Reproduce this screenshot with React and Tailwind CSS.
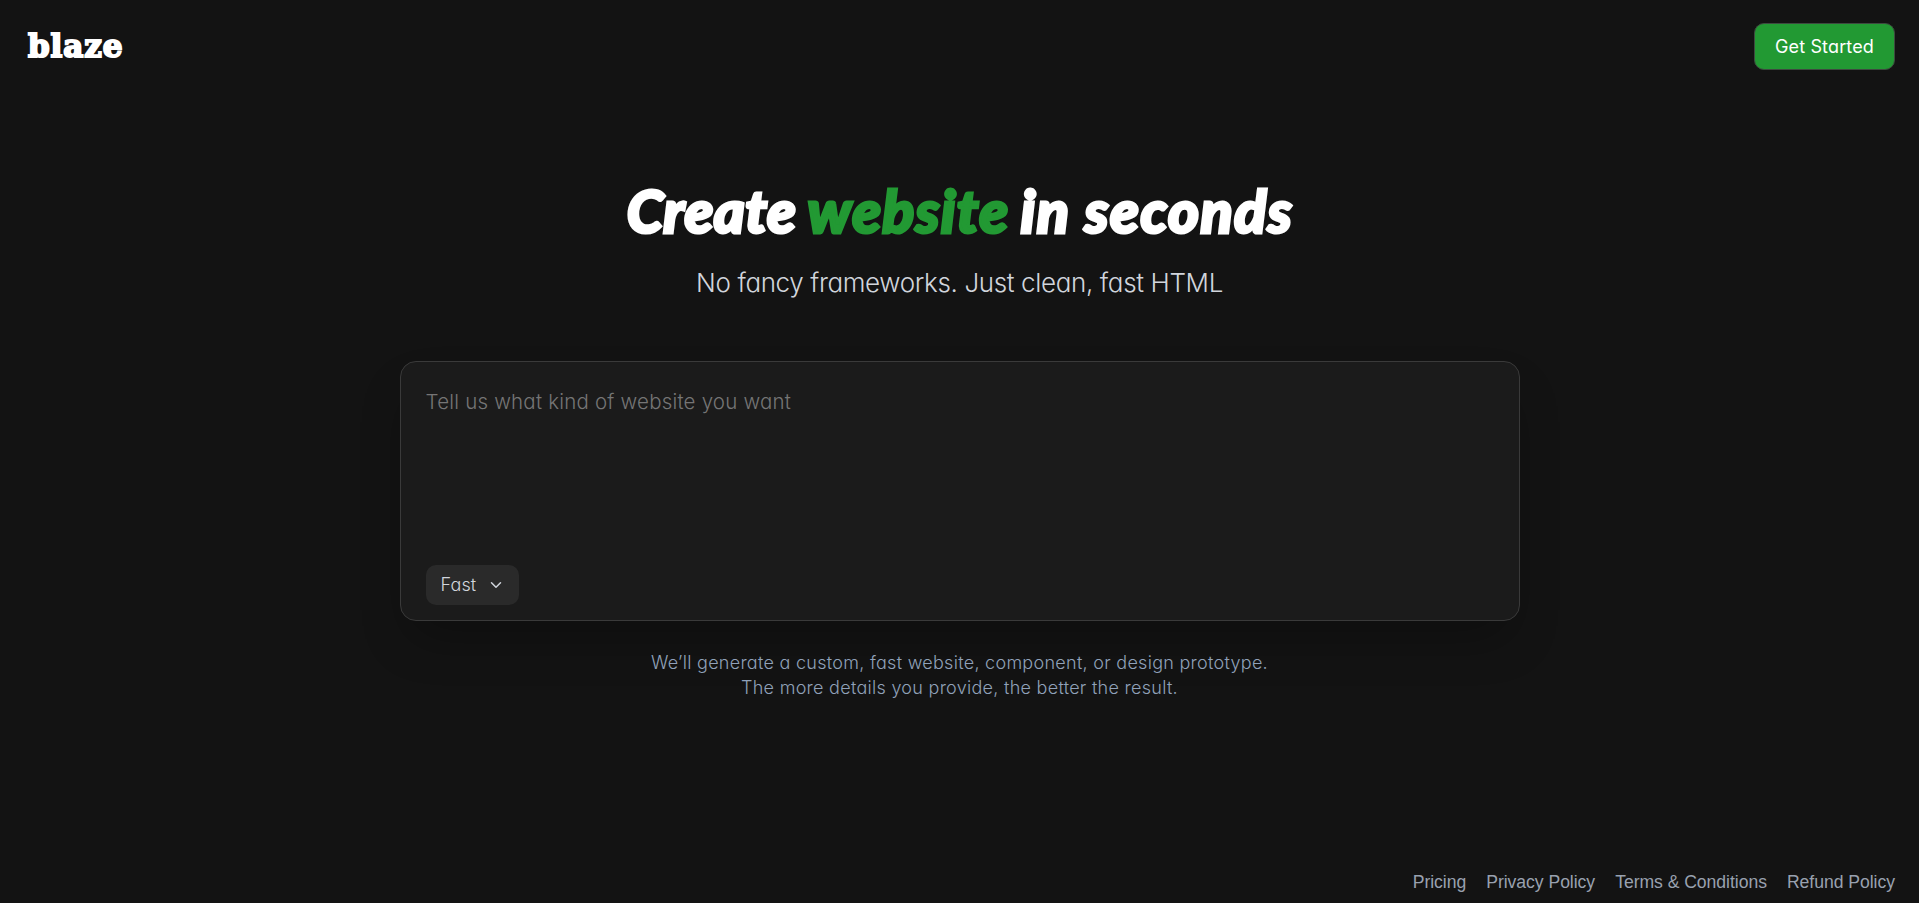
import { useState } from "react"
import { ChevronDown } from "lucide-react"

const footerLinks = ["Pricing", "Privacy Policy", "Terms & Conditions", "Refund Policy"]

function Header() {
  return (
    <header className="flex items-start justify-between pl-7 pr-6 pt-[23px]">
      <a
        href="#"
        className="mt-[2px] text-[31px] leading-[42px] font-bold text-white font-['DejaVu_Serif',serif] tracking-[0.9px] [-webkit-text-stroke:2px_white]"
      >
        blaze
      </a>
      <button className="flex h-[47px] w-[141px] items-center justify-center rounded-[10px] border border-[#3d4a3f] bg-[#229933] text-[18px] tracking-[0.15px] text-white">
        Get Started
      </button>
    </header>
  )
}

function PromptBox() {
  const [prompt, setPrompt] = useState("")

  return (
    <div className="flex h-[260px] w-[1120px] flex-col justify-between rounded-2xl border border-[#3a3a3a] bg-[#1b1b1b] px-[25px] pt-[25px] pb-[15px] shadow-[0_25px_50px_-12px_rgba(0,0,0,0.3)]">
      <textarea
        value={prompt}
        onChange={(e) => setPrompt(e.target.value)}
        placeholder="Tell us what kind of website you want"
        className="h-[140px] w-full resize-none text-[20.5px] leading-[30px] font-light tracking-[0.2px] text-gray-200 outline-none placeholder:text-[#757575]"
      />
      <button className="flex h-10 w-[93px] items-center justify-between rounded-[10px] bg-[#2a2a2a] pr-3.5 pb-px pl-[15px] text-[18px] font-light tracking-[0.1px] text-gray-300">
        Fast
        <ChevronDown size={18} strokeWidth={2} />
      </button>
    </div>
  )
}

export default function App() {
  return (
    <div className="flex h-screen flex-col bg-[#131313] font-['Inter','Open_Sans',sans-serif] [font-feature-settings:'cv11']">
      <Header />

      <main className="flex flex-1 flex-col items-center">
        <h1 className="mt-[102px] flex h-[78px] items-center gap-[11px] pl-px text-[59px] leading-[76px] font-black text-white italic font-['Lato',sans-serif] [-webkit-text-stroke:3px_white]">
          <span className="tracking-[0.5px]">Create</span>
          <span className="tracking-[1.2px] text-[#229933] [-webkit-text-stroke-color:#229933]">website</span>
          <span className="tracking-[1.5px]">in seconds</span>
        </h1>
        <p className="mt-[15px] text-[26px] leading-9 font-light tracking-[-0.36px] text-gray-300">
          No fancy frameworks. Just clean, fast HTML
        </p>
        <div className="mt-[60px]">
          <PromptBox />
        </div>
        <p className="mt-[29px] text-center text-[18px] leading-[25px] font-light tracking-[0.28px] text-slate-400">
          We’ll generate a custom, fast website, component, or design prototype.
          <br />
          The more details you provide, the better the result.
        </p>
      </main>

      <footer className="flex justify-end gap-5 pr-6 pb-2 text-[17.6px] leading-[26px] tracking-[-0.04px] text-gray-400 font-['Liberation_Sans',sans-serif]">
        {footerLinks.map((link) => (
          <a key={link} href="#">
            {link}
          </a>
        ))}
      </footer>
    </div>
  )
}
